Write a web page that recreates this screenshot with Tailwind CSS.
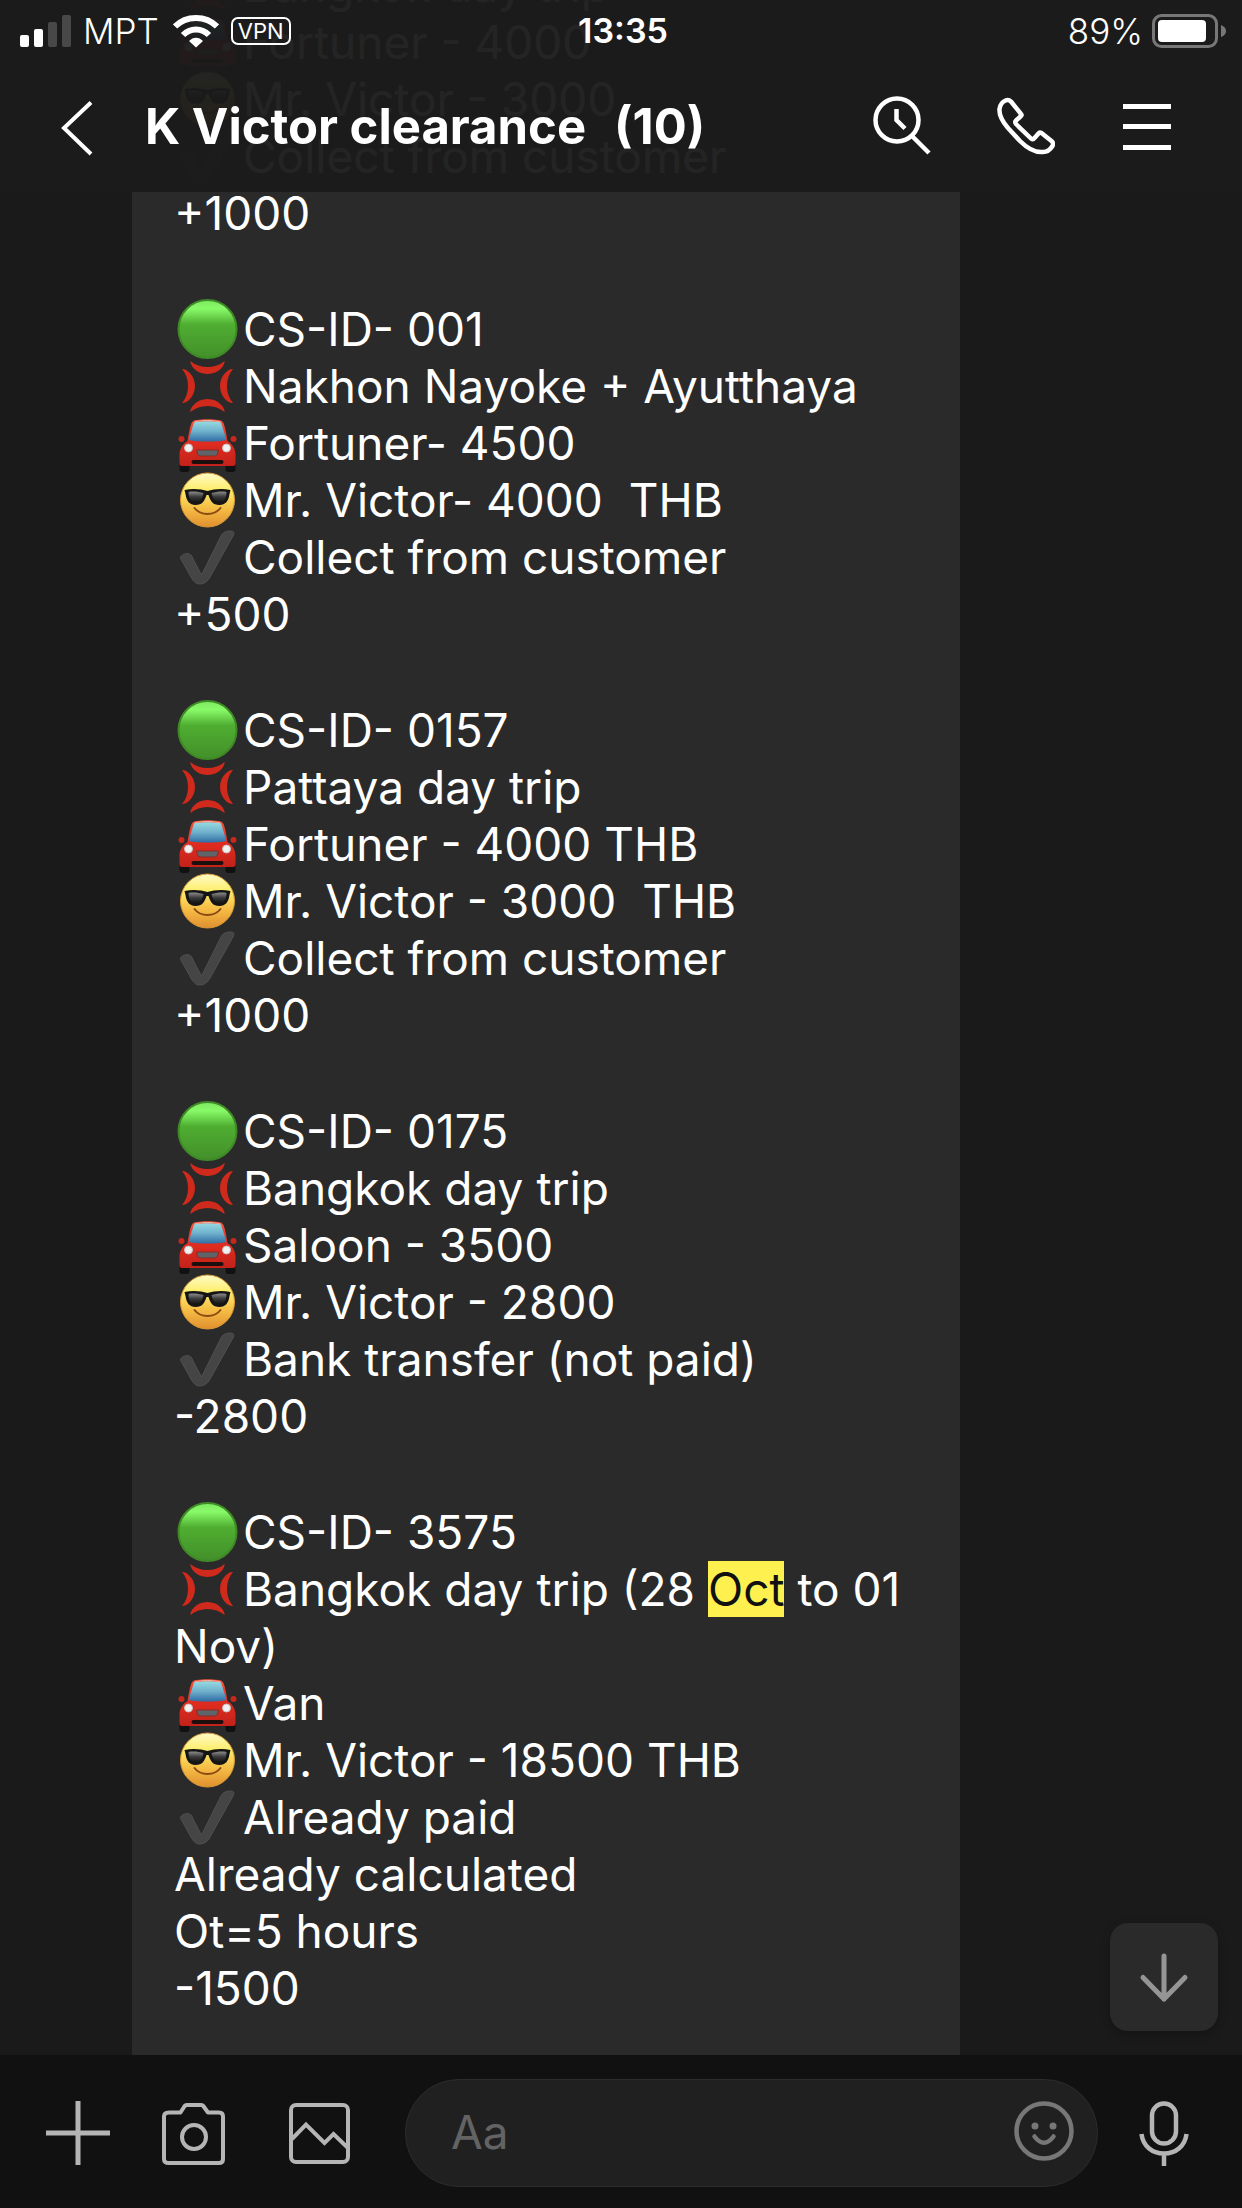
<!DOCTYPE html>
<html lang="en">
<head>
<meta charset="utf-8">
<meta name="viewport" content="width=device-width, initial-scale=1">
<title>K Victor clearance</title>
<script src="https://cdn.jsdelivr.net/npm/@tailwindcss/browser@4"></script>
</head>
<body class="bg-[#1a1a1a] font-['Inter',sans-serif] text-white">

<!-- Shared emoji artwork -->
<svg class="absolute size-0" aria-hidden="true">
  <defs>
    <linearGradient id="g-green" x1="0" y1="0" x2="0" y2="1"><stop offset="0" stop-color="#7de860"/><stop offset=".15" stop-color="#88fa68"/><stop offset=".42" stop-color="#4fae31"/><stop offset="1" stop-color="#438f2a"/></linearGradient>
    <linearGradient id="g-glass" x1="0" y1="0" x2="0" y2="1"><stop offset="0" stop-color="#96dbe2"/><stop offset=".5" stop-color="#6fb0cc"/><stop offset="1" stop-color="#2f6ea5"/></linearGradient>
    <linearGradient id="g-red" x1="0" y1="0" x2="0" y2="1"><stop offset="0" stop-color="#f4553f"/><stop offset=".5" stop-color="#e02c20"/><stop offset="1" stop-color="#c2221a"/></linearGradient>
    <linearGradient id="g-face" x1="0" y1="0" x2="0" y2="1"><stop offset="0" stop-color="#fffbc8"/><stop offset=".3" stop-color="#fdee6e"/><stop offset=".65" stop-color="#f6bd45"/><stop offset="1" stop-color="#e0902f"/></linearGradient>
    <linearGradient id="g-lens" x1="0" y1="0" x2="0" y2="1"><stop offset="0" stop-color="#8a8a8a"/><stop offset=".5" stop-color="#3a3a3a"/><stop offset="1" stop-color="#151515"/></linearGradient>
    <symbol id="green" viewBox="0 0 68 57" overflow="visible">
      <circle cx="33" cy="28" r="29" fill="url(#g-green)" stroke="#3f8a27" stroke-width="2"/>
    </symbol>
    <symbol id="anger" viewBox="0 0 68 57" overflow="visible">
      <g fill="#cf2a1c">
        <path d="M16 3c9 8 25 8 34 0 1 3-5 13-17 13S15 6 16 3z"/>
        <path d="M16 54c9-8 25-8 34 0 1-3-5-13-17-13S15 51 16 54z"/>
        <path d="M7.500 11c8 9 8 25 0 34 3 1 13-5 13-17s-10-18-13-17z"/>
        <path d="M58.500 11c-8 9-8 25 0 34-3 1-13-5-13-17s10-18 13-17z"/>
      </g>
    </symbol>
    <symbol id="car" viewBox="0 0 68 57" overflow="visible">
      <rect x="5" y="46" width="10" height="11" rx="3" fill="#111"/><rect x="51" y="46" width="10" height="11" rx="3" fill="#111"/>
      <ellipse cx="7" cy="24" rx="3" ry="3" fill="#c9271d"/><ellipse cx="59" cy="24" rx="3" ry="3" fill="#c9271d"/>
      <path d="M17 8c1-2 3-3 5-3 8-1 14-1 22 0 2 0 4 1 5 3 2 5 3 12 4 18 5 3 8 8 8 14v9c0 1-1 2-3 2H8c-2 0-3-1-3-2v-9c0-6 3-11 8-14 1-6 2-13 4-18z" fill="url(#g-red)"/>
      <path d="M19 9c0-2 2-2 3-2 8-1 14-1 22 0 1 0 3 0 3 2l5 16c-10 2-28 2-38 0z" fill="url(#g-glass)"/>
      <path d="M20 7c8-2 18-2 26 0" stroke="#f3b5a5" stroke-width="1" fill="none"/>
      <circle cx="14" cy="33" r="4" fill="#f1f1f1" stroke="#c9c0bd"/><circle cx="52" cy="33" r="4" fill="#f1f1f1" stroke="#c9c0bd"/>
      <path d="M22 35h22l-1 4q-1 2-3 2H26q-2 0-3-2z" fill="#5e6468" stroke="#8b2a22"/>
      <rect x="17" y="45" width="32" height="4" rx="2" fill="#1c0f0e"/>
    </symbol>
    <symbol id="cool" viewBox="0 0 68 57" overflow="visible">
      <circle cx="33" cy="28" r="27" fill="url(#g-face)" stroke="#d99a35"/>
      <path d="M20 36c6 8 20 8 26 0" fill="none" stroke="#8a4a14" stroke-width="2" stroke-linecap="round"/>
      <path d="M10 18c8-2 17-1 23 1 6-2 15-3 23-1l-1 4c-1 7-4 11-10 11-7 0-9-4-11-10h-2c-2 6-4 10-11 10-6 0-9-4-10-11z" fill="#151515"/>
      <path d="M14 20c5-1 11 0 15 1-1 6-4 9-8 9-5 0-7-4-7-10zM52 20c-5-1-11 0-15 1 1 6 4 9 8 9 5 0 7-4 7-10z" fill="url(#g-lens)"/>
    </symbol>
    <symbol id="check" viewBox="0 0 68 57" overflow="visible">
      <path d="M6 28c2-3 6-4 9-3 2 1 3 3 4 6l8 15L47 6c2-3 5-4 9-4 3 0 4 1 3 4L35 49c-3 5-7 6-10 6-4 0-6-3-8-6L7 31c-1-1-1-2-1-3z" fill="#454545" stroke="#505050"/>
    </symbol>
  </defs>
</svg>

<div class="relative flex h-screen flex-col overflow-hidden">

  <header class="absolute inset-x-0 top-0 z-10 bg-[#1b1b1b]/96">
    <div class="grid h-[60px] grid-cols-3 items-center pt-[2px] pr-[15px] pl-[19px] text-[35px] leading-[44px]">
      <div class="flex items-center">
        <svg class="h-[34px] w-[54px]" viewBox="0 0 54 34" fill="#fff" aria-label="Signal"><rect x="1" y="21" width="9" height="12" rx="2"/><rect x="15" y="15" width="9" height="18" rx="2"/><g fill="#484848"><rect x="29" y="8" width="9" height="25" rx="2"/><rect x="43" y="1" width="9" height="32" rx="2"/></g></svg>
        <span class="ml-[10px] font-light">MPT</span>
        <svg class="ml-[14px] h-[34px] w-[46px]" viewBox="0 0 46 34" fill="none" stroke="#fff" stroke-width="6" aria-label="Wi-Fi"><path d="M2 12.500C13 1 33 1 44 12.500"/><path d="M10 21c7-7.500 19-7.500 26 0"/><path d="M16 27c4-4.500 10-4.500 14 0l-7 6.500z" fill="#fff" stroke="none"/></svg>
        <span class="ml-[12px] rounded-[7px] border-2 border-white px-[5px] text-[22px] leading-[24px]">VPN</span>
      </div>
      <time class="text-center text-[34px] font-semibold">13:35</time>
      <div class="flex items-center justify-end gap-[9px]">
        <span class="font-light">89%</span>
        <svg class="h-[34px] w-[75px]" viewBox="0 0 75 34" aria-label="Battery"><rect x="1.500" y="1.500" width="63" height="31" rx="8" fill="none" stroke="#777" stroke-width="3"/><rect x="6" y="6" width="48" height="22" rx="4" fill="#fff"/><path d="M69 11q5 2 5 6t-5 6z" fill="#777"/></svg>
      </div>
    </div>
    <div class="flex h-[132px] items-center pt-[2px] pr-[63px] pl-[46px]">
      <button type="button" aria-label="Back" class="shrink-0"><svg class="size-[64px]" viewBox="0 0 64 64" fill="none" stroke="#fff" stroke-width="4"><path d="M45 7.500 18 33l27 26"/></svg></button>
      <h1 class="ml-[35px] flex flex-1 gap-[28px] text-[49px] leading-[64px] font-bold whitespace-nowrap"><span>K Victor clearance</span><span>(10)</span></h1>
      <div class="flex gap-[60px]">
        <button type="button" aria-label="Search"><svg class="size-[64px]" viewBox="0 0 64 64" fill="none" stroke="#fff" stroke-width="4.500"><circle cx="30" cy="25" r="21.500"/><path d="M29.500 14v11l8.500 8.500M45 41l17 17"/></svg></button>
        <button type="button" aria-label="Call"><svg class="size-[64px]" viewBox="0 0 64 64" fill="none" stroke="#fff" stroke-width="4.500" stroke-linejoin="round"><path d="M20 6.500 30 19Q31 20 30 21L25 25.500Q23.500 27 25 29L40 43.500Q42 45 43.500 43L47.500 38.500Q48.500 37 50.500 38L60.500 46Q63 48 61.500 51C59 55 56 57 52 57 43 58 36 53 29 46L17 33C11 26 8 20 8.500 14 9 10 11 7 14.500 5.500Q17.500 4 20 6.500Z"/></svg></button>
        <button type="button" aria-label="Menu"><svg class="size-[64px]" viewBox="0 0 64 64" fill="#fff"><path d="M8 9h48v5H8zM8 29h48v5H8zM8 50h48v5H8z"/></svg></button>
      </div>
    </div>
  </header>

  <main class="relative flex min-h-0 flex-1 flex-col justify-end overflow-hidden">
    <article class="mr-[282px] ml-[132px] flex flex-col gap-[59px] bg-[#2a2a2a] pr-[40px] pb-[38px] pl-[42px] text-[46px] leading-[57px] [&_svg]:inline [&_svg]:h-[57px] [&_svg]:w-[69px] [&_svg]:overflow-visible [&_svg]:align-top">
      <section>
        <p><svg><use href="#anger"/></svg>Bangkok day trip</p>
        <p><svg><use href="#car"/></svg>Fortuner - 4000</p>
        <p><svg><use href="#cool"/></svg>Mr. Victor - 3000</p>
        <p><svg><use href="#check"/></svg>Collect from customer</p>
        <p>+1000</p>
      </section>
      <section>
        <p><svg><use href="#green"/></svg>CS-ID- 001</p>
        <p><svg><use href="#anger"/></svg>Nakhon Nayoke + Ayutthaya</p>
        <p><svg><use href="#car"/></svg>Fortuner- 4500</p>
        <p><svg><use href="#cool"/></svg>Mr. Victor- 4000&nbsp; THB</p>
        <p><svg><use href="#check"/></svg>Collect from customer</p>
        <p>+500</p>
      </section>
      <section>
        <p><svg><use href="#green"/></svg>CS-ID- 0157</p>
        <p><svg><use href="#anger"/></svg>Pattaya day trip</p>
        <p><svg><use href="#car"/></svg>Fortuner - 4000 THB</p>
        <p><svg><use href="#cool"/></svg>Mr. Victor - 3000&nbsp; THB</p>
        <p><svg><use href="#check"/></svg>Collect from customer</p>
        <p>+1000</p>
      </section>
      <section>
        <p><svg><use href="#green"/></svg>CS-ID- 0175</p>
        <p><svg><use href="#anger"/></svg>Bangkok day trip</p>
        <p><svg><use href="#car"/></svg>Saloon - 3500</p>
        <p><svg><use href="#cool"/></svg>Mr. Victor - 2800</p>
        <p><svg><use href="#check"/></svg>Bank transfer (not paid)</p>
        <p>-2800</p>
      </section>
      <section>
        <p><svg><use href="#green"/></svg>CS-ID- 3575</p>
        <p><svg><use href="#anger"/></svg>Bangkok day trip (28 <mark class="bg-[#fef14f] text-[#111]">Oct</mark> to 01 Nov)</p>
        <p><svg><use href="#car"/></svg>Van</p>
        <p><svg><use href="#cool"/></svg>Mr. Victor - 18500 THB</p>
        <p><svg><use href="#check"/></svg>Already paid</p>
        <p>Already calculated</p>
        <p>Ot=5 hours</p>
        <p>-1500</p>
      </section>
    </article>
    <button type="button" aria-label="Scroll to latest" class="absolute right-[24px] bottom-[24px] flex size-[108px] items-center justify-center rounded-[18px] bg-[#2a2a2a] shadow-[0_3px_9px_rgba(0,0,0,0.25)]">
      <svg class="size-[60px]" viewBox="0 0 60 60" fill="none" stroke="#959595" stroke-width="5" stroke-linecap="round" stroke-linejoin="round"><path d="M30 9v43M9 30.500l21 21.500 21-21.500"/></svg>
    </button>
  </main>

  <footer class="flex h-[153px] shrink-0 items-center bg-[#111] px-[46px] pt-[2px]">
    <button type="button" aria-label="More" class="shrink-0"><svg class="size-[64px]" viewBox="0 0 64 64" stroke="#b5b5b5" stroke-width="5"><path d="M0 32h64M32 0v64"/></svg></button>
    <button type="button" aria-label="Camera" class="ml-[52px] shrink-0"><svg class="size-[64px]" viewBox="0 0 64 64" fill="none" stroke="#b5b5b5" stroke-width="4" stroke-linejoin="round"><path d="M18.500 11.500 22 6q1-2 3-2h14q2 0 3 2l4 5.500h11q4 0 4 4V58q0 4-4 4H7q-5 0-5-4V15.500q0-4 5-4z"/><circle cx="32" cy="36" r="12"/></svg></button>
    <button type="button" aria-label="Photos" class="ml-[62px] shrink-0"><svg class="size-[64px]" viewBox="0 0 64 64" fill="none" stroke="#b5b5b5" stroke-width="4"><rect x="3" y="4" width="57" height="57" rx="5"/><path d="m4 38 14-14.500L36.500 42l9-9L60 47"/></svg></button>
    <div class="ml-[53px] flex h-[108px] min-w-0 flex-1 items-center rounded-full border border-[#2c2c2c] bg-[#202020] pr-[21px] pl-[45px]">
      <input type="text" aria-label="Message" placeholder="Aa" class="min-w-0 flex-1 bg-transparent text-[46px] leading-[57px] outline-none placeholder:text-[#636363]">
      <button type="button" aria-label="Emoji" class="shrink-0"><svg class="size-[64px]" viewBox="0 0 64 64" fill="none" stroke="#777" stroke-width="4.500"><circle cx="32" cy="30" r="27.500"/><path d="M22.500 35.500q9.500 12.500 19 0" stroke-linecap="round"/><g fill="#777" stroke="none"><circle cx="23" cy="25" r="3.500"/><circle cx="41" cy="25" r="3.500"/></g></svg></button>
    </div>
    <button type="button" aria-label="Voice message" class="ml-[34px] shrink-0"><svg class="size-[64px] overflow-visible" viewBox="0 0 64 64" fill="none" stroke="#b5b5b5" stroke-width="4.500"><rect x="20" y="2.500" width="24" height="40" rx="12"/><path d="M9.500 33C11 45 20 52.500 32 52.500S53 45 54.500 33M32 52.500V65"/></svg></button>
  </footer>
</div>
</body>
</html>
